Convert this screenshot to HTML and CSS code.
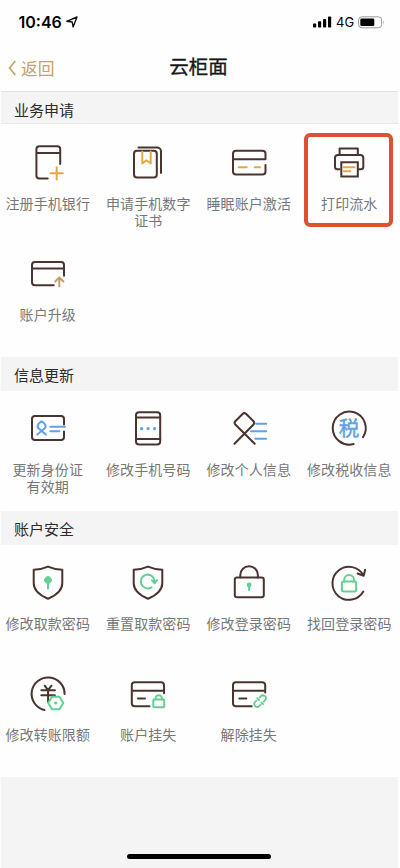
FILE: index.html
```html
<!DOCTYPE html>
<html lang="zh-CN">
<head>
<meta charset="utf-8">
<meta name="viewport" content="width=device-width">
<title>云柜面</title>
<link rel="stylesheet" href="styles.css">
</head>
<body>
<div class="screen">
  <div class="status">
    <span class="time">10:46</span>
    <svg class="location" width="12" height="12" viewBox="0 0 12 12"><path d="M.8 5.300 11 1 7.100 11 6.200 6Z"/></svg>
    <svg class="signal" width="19" height="12" viewBox="0 0 19 12"><rect x="0" y="7.5" width="3.2" height="4" rx=".8"/><rect x="5" y="5.2" width="3.2" height="6.3" rx=".8"/><rect x="10" y="3" width="3.2" height="8.5" rx=".8"/><rect x="15" y=".5" width="3.2" height="11" rx=".8"/></svg>
    <span class="network">4G</span>
    <svg class="battery" width="27" height="13" viewBox="0 0 27 13"><rect class="shell" x=".6" y=".8" width="23" height="11" rx="3.2"/><rect x="2.3" y="2.5" width="14" height="7.6" rx="1.3"/><path class="cap" d="M25 4.5q1.5 1.8 0 3.7z"/></svg>
  </div>
  <header class="nav">
    <a class="back"><svg width="8" height="16" viewBox="0 0 8 16"><path d="M7.300 1 1.500 8l5.800 7"/></svg><span>返回</span></a>
    <h1>云柜面</h1>
  </header>

  <h2 class="section-title lined">业务申请</h2>
  <div class="grid">
    <div class="item">
      <svg class="icon" viewBox="0 0 40 40"><path d="M19.700 36.500H11.400a3 3 0 0 1-3-3V7.300a3 3 0 0 1 3-3H29.200a3 3 0 0 1 3 3V22M8.400 10.900H32.200"/><path class="gold" d="M22.600 31.300h12.200M28.700 25.200v12.200"/></svg>
      <span>注册手机银行</span>
    </div>
    <div class="item">
      <svg class="icon" viewBox="0 0 40 40"><rect x="6" y="8.700" width="22.800" height="26.900" rx="3"/><path d="M10.500 5.500H29a4 4 0 0 1 4 4V31"/><path class="gold" d="M14.300 9.500V21.500l4.200-3.200 4.200 3.200V9.500"/></svg>
      <span>申请手机数字<br>证书</span>
    </div>
    <div class="item">
      <svg class="icon" viewBox="0 0 40 40"><path d="M36.500 17.300V11.800a3 3 0 0 0-3-3H7a3 3 0 0 0-3 3V29.500a3 3 0 0 0 3 3H33.500a3 3 0 0 0 3-3V23M4 17.300H36.500"/><path class="gold" d="M9.700 25.200h8M25.700 25.200H31"/></svg>
      <span>睡眠账户激活</span>
    </div>
    <div class="item marked">
      <svg class="icon" viewBox="0 0 40 40"><path d="M10.600 13V6.500H28.800V13M10.500 27.200H8.500a2.500 2.500 0 0 1-2.500-2.500V16a3 3 0 0 1 3-3H31.300a3 3 0 0 1 3 3v8.700a2.500 2.500 0 0 1-2.500 2.500H30"/><path class="square" d="M12.300 20.300H28.800V34.500H12.300z"/><path class="gold" d="M14.700 25.200h10.800M14.700 29.200h6.600"/></svg>
      <span>打印流水</span>
    </div>
    <div class="item">
      <svg class="icon" viewBox="0 0 40 40"><path d="M25.700 32.300H7a3 3 0 0 1-3-3V12a3 3 0 0 1 3-3H33a3 3 0 0 1 3 3V22.700M4 15.400H36"/><path class="tan" d="M31.300 33.300V24.800M27.200 28.500l4.100-4 4.100 4"/></svg>
      <span>账户升级</span>
    </div>
  </div>

  <h2 class="section-title">信息更新</h2>
  <div class="grid update">
    <div class="item">
      <svg class="icon" viewBox="0 0 40 40"><path d="M36 16.500V11a3 3 0 0 0-3-3H7a3 3 0 0 0-3 3V29a3 3 0 0 0 3 3H33a3 3 0 0 0 3-3V23.500"/><path class="blue" d="M22.300 18.800H37M22.300 23.300h9M9.300 26.600l7.200-6.100q2-2 .5-4.200l-1.800-1.900q-1.600-1.500-3.200 0l-1.800 1.900q-1.500 2.200.5 4.200l7.200 6.100"/></svg>
      <span>更新身份证<br>有效期</span>
    </div>
    <div class="item">
      <svg class="icon" viewBox="0 0 40 40"><rect x="8" y="4.300" width="24.200" height="32.200" rx="3"/><path d="M8 9.500H32.200M8 31H32.200"/><g class="blue-fill"><circle cx="13.600" cy="20.700" r="1.600"/><circle cx="20.100" cy="20.700" r="1.600"/><circle cx="26.600" cy="20.700" r="1.600"/></g></svg>
      <span>修改手机号码</span>
    </div>
    <div class="item">
      <svg class="icon" viewBox="0 0 40 40"><path d="M5.500 35.700 24.500 16.500q1.400-1.700 0-3.200L17 5.800q-1.600-1.400-3.200 0L6.300 13.300q-1.400 1.500 0 3.200L25.700 35.700"/><path class="blue" d="M27.200 15.700h10M22 23.300h15.200M26.300 30.800h10.900"/></svg>
      <span>修改个人信息</span>
    </div>
    <div class="item">
      <svg class="icon" viewBox="0 0 40 40"><path d="M24.600 36A16.500 16.500 0 1 1 34 29.200"/><text class="tax" x="20" y="27.700">税</text></svg>
      <span>修改税收信息</span>
    </div>
  </div>

  <h2 class="section-title">账户安全</h2>
  <div class="grid security">
    <div class="item">
      <svg class="icon" viewBox="0 0 40 40"><path d="M20 3.600Q12.500 6.800 5.700 6.800V20q0 10 14.300 15.700Q34.300 30 34.300 20V6.800Q27.500 6.800 20 3.600z"/><path class="green-fill" d="M20 13.100q1.500 0 3.400 2.300 1.500 1.900 0 3.400L21 21v4.500a1 1 0 0 1-2 0V21l-2.400-2.200q-1.500-1.500 0-3.400 1.900-2.300 3.400-2.300z"/></svg>
      <span>修改取款密码</span>
    </div>
    <div class="item">
      <svg class="icon" viewBox="0 0 40 40"><path d="M20 3.600Q12.500 6.800 5.700 6.800V20q0 10 14.300 15.700Q34.300 30 34.300 20V6.800Q27.500 6.800 20 3.600z"/><path class="green" d="M23.500 24.300A6.900 6.900 0 1 1 26.600 18.500M24 17.300l2.700 3 2.300-3.300"/></svg>
      <span>重置取款密码</span>
    </div>
    <div class="item">
      <svg class="icon" viewBox="0 0 40 40"><rect x="5.800" y="14.400" width="29" height="19.900" rx="2.300"/><path d="M11.300 14.400V12a8.800 8.800 0 0 1 17.600 0v2.400"/><path class="green" d="M20.100 22v5"/><circle class="green-fill" cx="20.100" cy="21.900" r="2.400"/></svg>
      <span>修改登录密码</span>
    </div>
    <div class="item">
      <svg class="icon" viewBox="0 0 40 40"><path d="M34.300 28.500A16.500 16.500 0 1 1 34.500 12.500M36.100 6.700 34.700 12.800 28.600 10.500"/><rect class="green" x="12.900" y="18.500" width="14.200" height="10" rx="1.500"/><path class="green" d="M15.200 18.500V17a4.900 4.900 0 0 1 9.800 0v1.500"/></svg>
      <span>找回登录密码</span>
    </div>
    <div class="item">
      <svg class="icon" viewBox="0 0 40 40"><path d="M16.500 36A16.500 16.500 0 1 1 36.600 20M16.700 11.700 20 16.200l3.500-4.500M13.300 16.300h13.600M13.300 21.300h13.600M20.100 16.300V28"/><path class="green hexagon" d="M24 22.700h7.500L35.300 29l-3.800 6.300H24L20.200 29z"/><circle class="green-fill" cx="27.700" cy="29" r="1.600"/></svg>
      <span>修改转账限额</span>
    </div>
    <div class="item">
      <svg class="icon" viewBox="0 0 40 40"><path d="M21.500 32.300H6.800a3 3 0 0 1-3-3V11.200a3 3 0 0 1 3-3H33a3 3 0 0 1 3 3v8M3.800 16.800H36M10 24.500h7"/><rect class="green" x="25.300" y="25.400" width="10.900" height="7.900" rx=".8"/><path class="green" d="M27.500 25.400v-1a3.200 3.200 0 0 1 6.400 0v1"/></svg>
      <span>账户挂失</span>
    </div>
    <div class="item">
      <svg class="icon" viewBox="0 0 40 40"><path d="M22.700 32.300H7a3 3 0 0 1-3-3V11.200a3 3 0 0 1 3-3H33.200a3 3 0 0 1 3 3v7.300M4 16.800H36.200M10.300 24.500h7"/><g class="green chain"><path d="M28.500 24h-2a3.200 3.200 0 0 0 0 6.400h2M33.500 24h2a3.200 3.200 0 0 1 0 6.400h-2M31 22.500v3M31 29v3"/></g></svg>
      <span>解除挂失</span>
    </div>
  </div>
  <footer class="bottom"><div class="home-bar"></div></footer>
</div>
</body>
</html>
```
FILE: styles.css
```css
*, *::after { box-sizing: border-box; }
body {
  margin: 0;
  background: #fefefe;
  font-family: "Noto Sans CJK SC", sans-serif;
}
.screen {
  width: 400px;
  height: 868px;
  display: flex;
  flex-direction: column;
  overflow: hidden;
}
.status {
  height: 44px;
  padding: 0 15px 0 18.500px;
  display: flex;
  align-items: center;
  flex: none;
}
.time {
  font: 600 16px/20px Inter, sans-serif;
  width: 47px;
}
.location { fill: none; stroke: #111; stroke-width: 1.4; stroke-linejoin: round; }
.signal { margin-left: auto; margin-right: 4px; }
.network { font: 13px/20px Inter, sans-serif; width: 22px; }
.battery .shell { fill: none; stroke: #999; }
.battery .cap { fill: #999; }
.nav {
  height: 47px;
  display: grid;
  grid-template-columns: 80px 1fr 83px;
  align-items: center;
  padding-bottom: 3px;
  flex: none;
}
.back {
  display: flex;
  align-items: center;
  gap: 5px;
  padding-left: 8px;
  padding-top: 3px;
  color: #bfa566;
  font-size: 16.800px;
  line-height: 24px;
}
.back svg { flex: none; fill: none; stroke: #bfa566; stroke-width: 1.7; }
h1 {
  margin: 0;
  text-align: center;
  font-size: 19.500px;
  line-height: 28px;
  font-weight: 400;
  -webkit-text-stroke: .35px #181818;
  color: #181818;
}
.section-title {
  flex: none;
  height: 34px;
  margin: 0 2px 0 1px;
  padding-left: 13px;
  background: #f4f4f4;
  color: #2b2b2b;
  font-size: 15px;
  font-weight: 400;
  line-height: 36px;
}
.section-title.lined {
  height: 33px;
  line-height: 35px;
  border-top: 1px solid #e2e2e2;
  border-bottom: 1px solid #e8e8e8;
}
.grid {
  flex: none;
  width: 402px;
  margin-left: -2.500px;
  display: grid;
  grid-template-columns: repeat(4, 100.500px);
  grid-auto-rows: 111px;
  height: 233px;
}
.grid.update { height: 120px; }
.grid.security { height: 232px; }
.item {
  position: relative;
  display: flex;
  flex-direction: column;
  align-items: center;
  padding-top: 18px;
  gap: 13px;
  color: #777;
  font-size: 14px;
  line-height: 17px;
  letter-spacing: .1px;
  text-align: center;
  white-space: nowrap;
}
.update .item { padding-top: 17px; }
.security .item { padding-top: 17.500px; gap: 12.500px; }
.marked::after {
  content: "";
  position: absolute;
  left: 5px;
  top: 9px;
  width: 89px;
  height: 94px;
  border: 4px solid #df5030;
  border-radius: 6px;
}
.icon {
  flex: none;
  width: 40px;
  height: 40px;
  fill: none;
  stroke: #49342f;
  stroke-width: 2;
  stroke-linecap: round;
  stroke-linejoin: round;
  overflow: visible;
}
.gold { stroke: #e5a746; }
.tan { stroke: #c0a069; }
.blue { stroke: #62a0e8; }
.green { stroke: #64cf92; }
.square { stroke-linejoin: miter; }
.hexagon { fill: #fefefe; }
.blue-fill { fill: #62a0e8; stroke: none; }
.green-fill { fill: #64cf92; stroke: none; }
.chain { transform: translate(31px, 27px) rotate(-45deg) scale(.9) translate(-31px, -27px); }
.tax {
  fill: #62a0e8;
  stroke: #62a0e8;
  stroke-width: .5;
  font-size: 20.500px;
  font-weight: 400;
  text-anchor: middle;
  letter-spacing: 0;
}
.bottom {
  flex: 1;
  margin: 0 2px 0 1px;
  background: #f4f4f4;
  display: flex;
  align-items: flex-end;
  justify-content: center;
  padding: 0 1px 9px 0;
}
.home-bar {
  width: 144px;
  height: 5px;
  border-radius: 3px;
  background: #000;
}
```
